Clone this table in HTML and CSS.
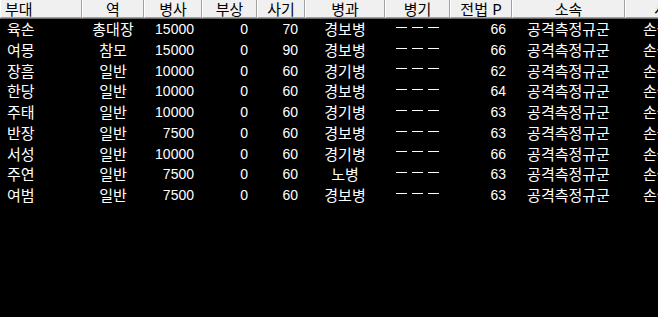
FILE: index.html
```html
<!DOCTYPE html>
<html lang="ko">
<head>
<meta charset="utf-8">
<title>부대 목록</title>
<link rel="stylesheet" href="styles.css">
</head>
<body>
<div class="table">
  <div class="row head">
    <div class="hc left">부대</div>
    <div class="hc">역</div>
    <div class="hc">병사</div>
    <div class="hc">부상</div>
    <div class="hc">사기</div>
    <div class="hc">병과</div>
    <div class="hc">병기</div>
    <div class="hc">전법 P</div>
    <div class="hc">소속</div>
    <div class="hc">사령관</div>
  </div>
  <div class="row"><div class="c name">육손</div><div class="c ctr">총대장</div><div class="c num n1">15000</div><div class="c num n2">0</div><div class="c num n3">70</div><div class="c ctr">경보병</div><div class="c dashes"><i></i><i></i><i></i></div><div class="c num n4">66</div><div class="c ctr">공격측정규군</div><div class="c last">손권</div></div>
  <div class="row"><div class="c name">여몽</div><div class="c ctr">참모</div><div class="c num n1">15000</div><div class="c num n2">0</div><div class="c num n3">90</div><div class="c ctr">경보병</div><div class="c dashes"><i></i><i></i><i></i></div><div class="c num n4">66</div><div class="c ctr">공격측정규군</div><div class="c last">손권</div></div>
  <div class="row"><div class="c name">장흠</div><div class="c ctr">일반</div><div class="c num n1">10000</div><div class="c num n2">0</div><div class="c num n3">60</div><div class="c ctr">경기병</div><div class="c dashes"><i></i><i></i><i></i></div><div class="c num n4">62</div><div class="c ctr">공격측정규군</div><div class="c last">손권</div></div>
  <div class="row"><div class="c name">한당</div><div class="c ctr">일반</div><div class="c num n1">10000</div><div class="c num n2">0</div><div class="c num n3">60</div><div class="c ctr">경보병</div><div class="c dashes"><i></i><i></i><i></i></div><div class="c num n4">64</div><div class="c ctr">공격측정규군</div><div class="c last">손권</div></div>
  <div class="row"><div class="c name">주태</div><div class="c ctr">일반</div><div class="c num n1">10000</div><div class="c num n2">0</div><div class="c num n3">60</div><div class="c ctr">경기병</div><div class="c dashes"><i></i><i></i><i></i></div><div class="c num n4">63</div><div class="c ctr">공격측정규군</div><div class="c last">손권</div></div>
  <div class="row"><div class="c name">반장</div><div class="c ctr">일반</div><div class="c num n1">7500</div><div class="c num n2">0</div><div class="c num n3">60</div><div class="c ctr">경보병</div><div class="c dashes"><i></i><i></i><i></i></div><div class="c num n4">63</div><div class="c ctr">공격측정규군</div><div class="c last">손권</div></div>
  <div class="row"><div class="c name">서성</div><div class="c ctr">일반</div><div class="c num n1">10000</div><div class="c num n2">0</div><div class="c num n3">60</div><div class="c ctr">경기병</div><div class="c dashes"><i></i><i></i><i></i></div><div class="c num n4">66</div><div class="c ctr">공격측정규군</div><div class="c last">손권</div></div>
  <div class="row"><div class="c name">주연</div><div class="c ctr">일반</div><div class="c num n1">7500</div><div class="c num n2">0</div><div class="c num n3">60</div><div class="c ctr">노병</div><div class="c dashes"><i></i><i></i><i></i></div><div class="c num n4">63</div><div class="c ctr">공격측정규군</div><div class="c last">손권</div></div>
  <div class="row"><div class="c name">여범</div><div class="c ctr">일반</div><div class="c num n1">7500</div><div class="c num n2">0</div><div class="c num n3">60</div><div class="c ctr">경보병</div><div class="c dashes"><i></i><i></i><i></i></div><div class="c num n4">63</div><div class="c ctr">공격측정규군</div><div class="c last">손권</div></div>
</div>
</body>
</html>
```
FILE: styles.css
```css
html, body {
  margin: 0;
  padding: 0;
  background: #000;
  width: 658px;
  height: 317px;
  overflow: hidden;
}
.table {
  width: 725px;
  font-family: "Noto Sans CJK KR", "Liberation Sans", sans-serif;
  font-size: 15px;
  color: #fff;
}
.row {
  display: grid;
  grid-template-columns: 82px 62px 58px 55px 48px 80px 65px 62px 113px 100px;
  height: 20.75px;
  line-height: 20.75px;
}
.row.head {
  height: 19px;
  line-height: 17px;
  border-bottom: 1px solid #696969;
  box-sizing: border-box;
}
.hc {
  background: #f0f0f0;
  color: #000;
  text-align: center;
  border-left: 1px solid #ffffff;
  border-right: 1px solid #a0a0a0;
  border-bottom: 1px solid #a0a0a0;
  height: 18px;
  box-sizing: border-box;
  white-space: nowrap;
}
.hc.left {
  text-align: left;
  padding-left: 4px;
}
.c {
  white-space: nowrap;
}
.name {
  padding-left: 7px;
}
.ctr {
  text-align: center;
}
.num {
  text-align: right;
  font-family: "Liberation Sans", sans-serif;
  font-size: 14px;
}
.n1 { padding-right: 8px; }
.n2 { padding-right: 9px; }
.n3 { padding-right: 7px; }
.n4 { padding-right: 6px; }
.dashes {
  display: flex;
  justify-content: center;
  align-items: center;
  gap: 5px;
}
.dashes i {
  display: block;
  width: 11px;
  height: 1px;
  background: #fff;
  margin-bottom: 4px;
}
.last {
  padding-left: 18px;
}
```
